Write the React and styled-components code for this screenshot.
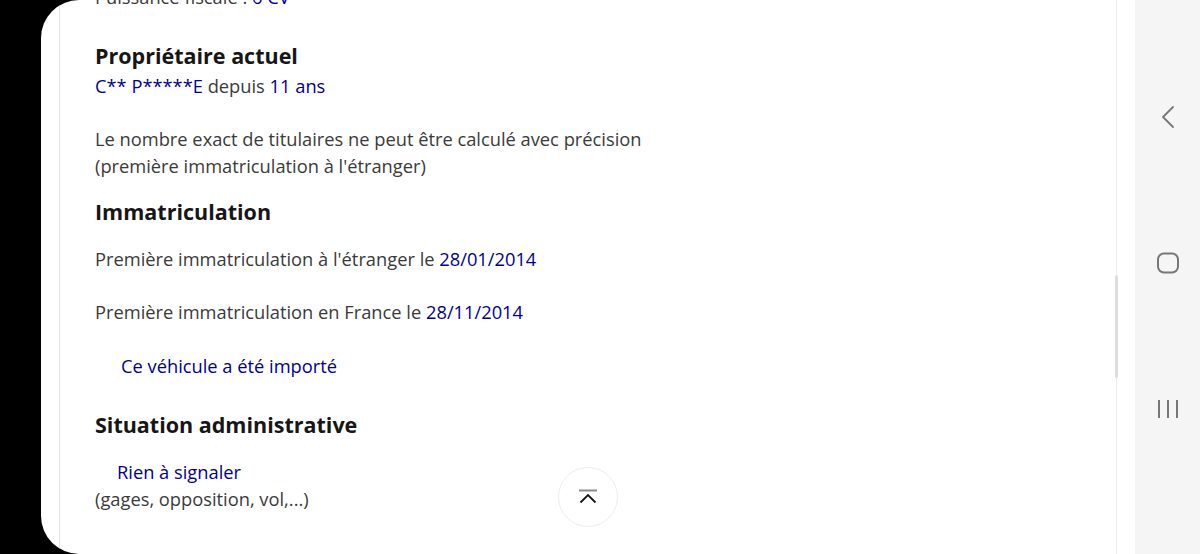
import React from "react";
import styled, { createGlobalStyle } from "styled-components";

const GlobalStyle = createGlobalStyle`
  html, body {
    margin: 0;
    padding: 0;
    background: #000;
  }
  * {
    box-sizing: border-box;
  }
`;

const Device = styled("div")`
  display: flex;
  width: 1200px;
  height: 554px;
  background: #000;
  overflow: hidden;
`;

const Bezel = styled("div")`
  width: 41px;
  flex-shrink: 0;
  background: #000;
`;

const Screen = styled("div")`
  position: relative;
  display: flex;
  flex: 1;
  background: #fff;
  border-radius: 38px 0 0 38px;
  overflow: hidden;
`;

const Page = styled("div")`
  flex: 1;
  margin-left: 18px;
  border-left: 1px solid #e6e6e6;
  padding-left: 35px;
  overflow: hidden;
  font-family: "Open Sans", "Noto Sans", sans-serif;
  color: #3a3a3a;
`;

const Body = styled("div")`
  margin-top: -17px;
`;

const Title = styled("h3")`
  margin: ${(p) => p.$top || 0}px 0 ${(p) => p.$bottom || 0}px;
  font-size: 21.5px;
  line-height: 32px;
  font-weight: 700;
  color: #161616;
`;

const Text = styled("p")`
  margin: 0 0 ${(p) => p.$bottom || 0}px;
  padding-left: ${(p) => p.$indent || 0}px;
  font-size: 18.3px;
  line-height: 27px;
  color: ${(p) => (p.$blue ? "#000091" : "#3a3a3a")};
`;

const Value = styled("span")`
  color: #000091;
`;

const Scrollbar = styled("div")`
  position: relative;
  width: 1px;
  margin-right: 18px;
  background: #ececec;
`;

const Thumb = styled("div")`
  position: absolute;
  left: -1px;
  top: 275px;
  width: 3px;
  height: 103px;
  border-radius: 2px;
  background: #dedede;
`;

const TopButton = styled("button")`
  position: absolute;
  left: 517px;
  top: 467px;
  width: 60px;
  height: 60px;
  border-radius: 50%;
  border: 1px solid #ededed;
  background: #fff;
  display: flex;
  align-items: center;
  justify-content: center;
  padding: 0;
  cursor: pointer;
`;

const NavBar = styled("nav")`
  width: 65px;
  flex-shrink: 0;
  background: #f5f5f5;
  display: flex;
  flex-direction: column;
  align-items: center;
  padding-top: 97px;
  gap: 106px;
`;

const NavKey = styled("div")`
  width: 40px;
  height: 40px;
  display: flex;
  align-items: center;
  justify-content: center;
`;

const App = () => (
  <>
    <GlobalStyle />
    <Device>
      <Bezel />
      <Screen>
        <Page>
          <Body>
            <Text>
              Puissance fiscale : <Value>6 CV</Value>
            </Text>
            <Title $top={30}>Propriétaire actuel</Title>
            <Text $bottom={26}>
              <Value>C** P*****E</Value> depuis <Value>11 ans</Value>
            </Text>
            <Text>
              Le nombre exact de titulaires ne peut être calculé avec précision
              <br />
              (première immatriculation à l'étranger)
            </Text>
            <Title $top={17} $bottom={17}>
              Immatriculation
            </Title>
            <Text $bottom={26}>
              Première immatriculation à l'étranger le <Value>28/01/2014</Value>
            </Text>
            <Text $bottom={27}>
              Première immatriculation en France le <Value>28/11/2014</Value>
            </Text>
            <Text $blue $indent={26}>
              Ce véhicule a été importé
            </Text>
            <Title $top={30} $bottom={17}>
              Situation administrative
            </Title>
            <Text $blue $indent={22}>
              Rien à signaler
            </Text>
            <Text>(gages, opposition, vol,...)</Text>
          </Body>
        </Page>
        <Scrollbar>
          <Thumb />
        </Scrollbar>
        <TopButton aria-label="Haut de page">
          <svg width="22" height="16" viewBox="0 0 22 16" fill="none">
            <path d="M2 1.5h18" stroke="#8a8a8a" strokeWidth="2" />
            <path
              d="M3.5 13.5L11 6l7.5 7.5"
              stroke="#161616"
              strokeWidth="1.8"
            />
          </svg>
        </TopButton>
      </Screen>
      <NavBar>
        <NavKey>
          <svg width="16" height="24" viewBox="0 0 16 24" fill="none">
            <path
              d="M13 2L3 12l10 10"
              stroke="#777"
              strokeWidth="1.8"
              strokeLinecap="round"
              strokeLinejoin="round"
            />
          </svg>
        </NavKey>
        <NavKey>
          <svg width="24" height="24" viewBox="0 0 24 24" fill="none">
            <rect
              x="2"
              y="2.5"
              width="20"
              height="19"
              rx="6"
              stroke="#777"
              strokeWidth="2"
            />
          </svg>
        </NavKey>
        <NavKey>
          <svg width="24" height="24" viewBox="0 0 24 24" fill="none">
            <path d="M3 3v18M12 3v18M21 3v18" stroke="#777" strokeWidth="2" />
          </svg>
        </NavKey>
      </NavBar>
    </Device>
  </>
);

export default App;
